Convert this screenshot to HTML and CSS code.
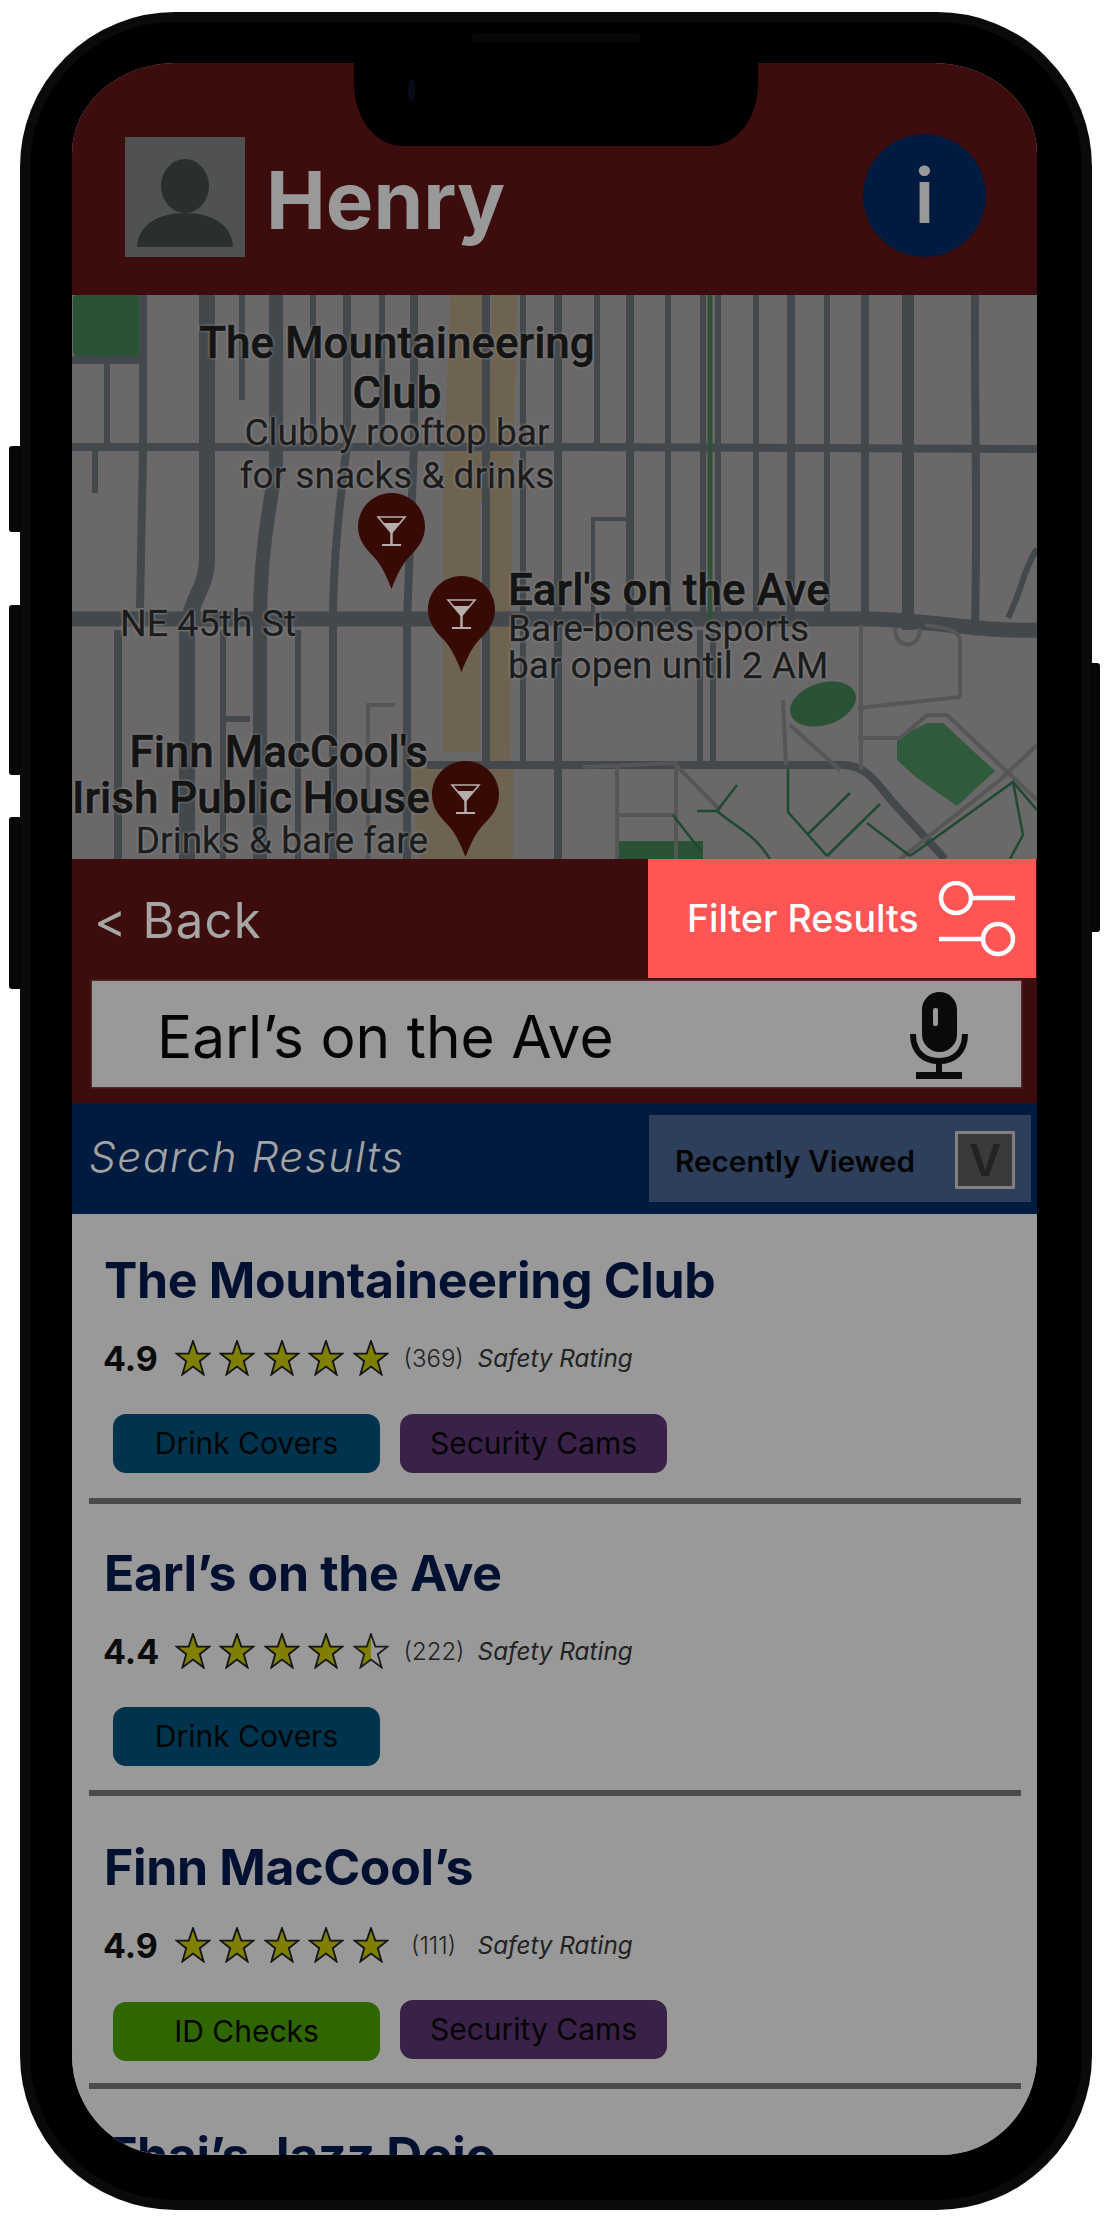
FILE: index.html
```html
<!DOCTYPE html>
<html lang="en">
<head>
<meta charset="utf-8">
<title>Henry - Search Results</title>
<link rel="stylesheet" href="styles.css">
</head>
<body>
<svg class="defs" width="0" height="0" aria-hidden="true">
  <defs>
    <symbol id="star" viewBox="0 0 36 36">
      <path d="M18 1 22.3 13.6H34.5L24.8 21.2 28.6 34.5 18 26.6 7.4 34.5 11.2 21.2 1.5 13.6H13.7Z" fill="#7f7f00" stroke="#141414" stroke-width="1.8" stroke-linejoin="miter"/>
    </symbol>
    <symbol id="star-half" viewBox="0 0 36 36">
      <path d="M18 1V26.6L7.4 34.5 11.2 21.2 1.5 13.6H13.7Z" fill="#7f7f00"/>
      <path d="M18 1 22.3 13.6H34.5L24.8 21.2 28.6 34.5 18 26.6 7.4 34.5 11.2 21.2 1.5 13.6H13.7Z" fill="none" stroke="#1c1c1c" stroke-width="1.8"/>
    </symbol>
    <symbol id="pin" viewBox="0 0 67 96">
      <path d="M33.5 0C52 0 67 15 67 33.5 67 46 60 55 52 63 44 71 38 84 33.5 96 29 84 23 71 15 63 7 55 0 46 0 33.5 0 15 15 0 33.5 0Z" fill="#370a05"/>
      <path d="M20 24H47L33.5 40Z" fill="none" stroke="#b5aead" stroke-width="1.6"/>
      <path d="M25.5 30H41.5L33.5 40Z" fill="#b5aead"/>
      <path d="M32.3 39H34.7V51H32.3ZM24 51H43V53H24Z" fill="#b5aead"/>
    </symbol>
  </defs>
</svg>

<div class="phone">
  <span class="side-btn side-btn-mute"></span>
  <span class="side-btn side-btn-up"></span>
  <span class="side-btn side-btn-down"></span>
  <span class="side-btn side-btn-power"></span>
  <span class="speaker"></span>

  <main class="screen">
    <div class="notch"><span class="camera"></span></div>

    <header class="top-bar">
      <div class="avatar">
        <svg viewBox="0 0 120 120" width="120" height="120" aria-hidden="true">
          <ellipse cx="60" cy="49" rx="24" ry="27" fill="#2b2e2e"/>
          <path d="M12 110C13 88 33 76 60 76S107 88 108 110Z" fill="#2b2e2e"/>
        </svg>
      </div>
      <h1 class="user-name">Henry</h1>
      <div class="info-btn">i</div>
    </header>

    <section class="map">
      <svg class="map-art" viewBox="72 295 965 564" width="965" height="564" aria-hidden="true">
        <g fill="#6e6350">
          <path d="M450 295H483V500H480V752H443V500Z"/>
          <path d="M492 295H517L512 500 510 767H485L488 500Z"/>
          <path d="M410 767H513V859H420Z"/>
        </g>
        <g fill="#2a5234">
          <rect x="73" y="295" width="67" height="61" rx="4"/>
          <ellipse cx="823" cy="704" rx="34" ry="21" transform="rotate(-18 823 704)"/>
          <path d="M897 738 927 723H943L995 771 957 806 917 778 897 760Z" fill="#305a3c"/>
          <rect x="615" y="841" width="88" height="18"/>
        </g>
        <g fill="none" stroke="#43484c">
          <g stroke-width="8">
            <path d="M143 295V450L140 608"/>
            <path d="M72 360H143"/>
            <path d="M72 447H560L1037 449"/>
            <path d="M486 295V765"/>
            <path d="M558 295V859"/>
            <path d="M630 295V625"/>
            <path d="M791 295V625"/>
            <path d="M865 295V625"/>
            <path d="M975 295C974 400 978 500 975 625"/>
            <path d="M414 295V445L407 620V859"/>
            <path d="M347 295V445C340 500 333 560 333 620V859"/>
            <path d="M118 630V859"/>
            <path d="M427 765H843C870 765 880 790 900 810L945 859"/>
          </g>
          <g stroke-width="6">
            <path d="M107 360V445"/>
            <path d="M95 449V493"/>
            <path d="M242 295V400"/>
            <path d="M313 295V445"/>
            <path d="M382 295V445"/>
            <path d="M523 295V765"/>
            <path d="M597 295V449"/>
            <path d="M668 295V625"/>
            <path d="M756 295V625"/>
            <path d="M827 295V625"/>
            <path d="M223 630V859"/>
            <path d="M298 630V859"/>
            <path d="M226 719H250"/>
            <path d="M703 295V620"/>
            <path d="M718 295V620"/>
            <path d="M700 630V765"/>
            <path d="M713 630V765"/>
            <path d="M1008 618C1022 590 1025 565 1037 549"/>
          </g>
          <path d="M593 615V519H627" stroke-width="4"/>
          <path d="M207 295V560C207 590 187 600 187 640V859" stroke-width="16"/>
          <path d="M276 295V470C268 510 260 560 260 620V859" stroke-width="14"/>
          <path d="M908 295V630" stroke-width="12"/>
          <path d="M72 619H870C930 620 980 632 1037 630" stroke-width="15"/>
          <path d="M710 295V625" stroke="#2e5238" stroke-width="5"/>
        </g>
        <g fill="none" stroke="#565656" stroke-width="4">
          <path d="M858 708 960 697"/>
          <path d="M858 738H900L927 715H947L1037 800"/>
          <path d="M861 625V770"/>
          <path d="M783 700 786 765"/>
          <path d="M790 725 840 770"/>
          <path d="M960 697V640C960 630 945 628 925 625"/>
          <path d="M895 628C895 650 920 650 920 628"/>
          <path d="M583 767 676 763V859"/>
          <path d="M617 765V859"/>
          <path d="M617 815H676"/>
          <path d="M676 765 720 810"/>
          <path d="M368 859V705H395"/>
          <path d="M900 859 1000 780"/>
          <path d="M1000 780 1037 745"/>
        </g>
        <g fill="none" stroke="#1e4a32" stroke-width="2.5">
          <path d="M788 769V812L827 856"/>
          <path d="M808 834 850 793"/>
          <path d="M827 856 880 804"/>
          <path d="M867 823 910 856"/>
          <path d="M697 811H717L737 785"/>
          <path d="M717 811C740 830 755 835 770 859"/>
          <path d="M673 815 700 850"/>
          <path d="M910 856 1013 782 1023 835 1010 859"/>
          <path d="M1013 782 1037 810"/>
        </g>
      </svg>

      <div class="map-label label-mount">
        <div class="place-name">The Mountaineering<br>Club</div>
        <div class="place-desc">Clubby rooftop bar<br>for snacks &amp; drinks</div>
      </div>
      <div class="map-label label-earl">
        <div class="place-name">Earl's on the Ave</div>
        <div class="place-desc">Bare-bones sports<br>bar open until 2 AM</div>
      </div>
      <div class="map-label label-finn">
        <div class="place-name">Finn MacCool's<br>Irish Public House</div>
        <div class="place-desc">Drinks &amp; bare fare</div>
      </div>
      <div class="map-label label-street">NE 45th St</div>

      <svg class="pin pin-mount" width="67" height="96" aria-hidden="true"><use href="#pin"/></svg>
      <svg class="pin pin-earl" width="67" height="96" aria-hidden="true"><use href="#pin"/></svg>
      <svg class="pin pin-finn" width="67" height="96" aria-hidden="true"><use href="#pin"/></svg>
    </section>

    <section class="controls">
      <div class="controls-row">
        <div class="back">&lt; Back</div>
        <div class="filter-btn">
          <span>Filter Results</span>
          <svg viewBox="0 0 78 76" width="78" height="76" fill="none" stroke="#fff" stroke-width="4.5" aria-hidden="true">
            <circle cx="18" cy="17" r="15"/>
            <path d="M33 17H77"/>
            <circle cx="60" cy="58" r="15"/>
            <path d="M1 58H45"/>
          </svg>
        </div>
      </div>
      <div class="search-box">
        <span class="search-text">Earl’s on the Ave</span>
        <svg class="mic" viewBox="0 0 58 88" width="58" height="88" aria-hidden="true">
          <rect x="12" y="0" width="35" height="60" rx="17.5" fill="#0a0a0a"/>
          <rect x="23" y="16" width="5" height="18" rx="2" fill="#999"/>
          <path d="M3 42C3 60 14 69 29 69S55 60 55 42" fill="none" stroke="#0a0a0a" stroke-width="6"/>
          <path d="M26 69H32V81H26Z" fill="#0a0a0a"/>
          <rect x="6" y="80" width="46" height="7" fill="#0a0a0a"/>
        </svg>
      </div>
    </section>

    <section class="results-head">
      <div class="results-title">Search Results</div>
      <div class="sort-box">
        <span class="sort-label">Recently Viewed</span>
        <span class="sort-toggle">V</span>
      </div>
    </section>

    <section class="results">
      <article class="card card-first">
        <h2 class="card-title">The Mountaineering Club</h2>
        <div class="rating-row">
          <span class="rating-value">4.9</span>
          <span class="stars">
            <svg width="36" height="36"><use href="#star"/></svg>
            <svg width="36" height="36"><use href="#star"/></svg>
            <svg width="36" height="36"><use href="#star"/></svg>
            <svg width="36" height="36"><use href="#star"/></svg>
            <svg width="36" height="36"><use href="#star"/></svg>
          </span>
          <span class="rating-count">(369)</span>
          <span class="rating-note">Safety Rating</span>
        </div>
        <div class="tags">
          <span class="tag tag-drink">Drink Covers</span>
          <span class="tag tag-cams">Security Cams</span>
        </div>
      </article>

      <article class="card card-second">
        <h2 class="card-title">Earl’s on the Ave</h2>
        <div class="rating-row">
          <span class="rating-value">4.4</span>
          <span class="stars">
            <svg width="36" height="36"><use href="#star"/></svg>
            <svg width="36" height="36"><use href="#star"/></svg>
            <svg width="36" height="36"><use href="#star"/></svg>
            <svg width="36" height="36"><use href="#star"/></svg>
            <svg width="36" height="36"><use href="#star-half"/></svg>
          </span>
          <span class="rating-count">(222)</span>
          <span class="rating-note">Safety Rating</span>
        </div>
        <div class="tags">
          <span class="tag tag-drink">Drink Covers</span>
        </div>
      </article>

      <article class="card card-third">
        <h2 class="card-title">Finn MacCool’s</h2>
        <div class="rating-row">
          <span class="rating-value">4.9</span>
          <span class="stars">
            <svg width="36" height="36"><use href="#star"/></svg>
            <svg width="36" height="36"><use href="#star"/></svg>
            <svg width="36" height="36"><use href="#star"/></svg>
            <svg width="36" height="36"><use href="#star"/></svg>
            <svg width="36" height="36"><use href="#star"/></svg>
          </span>
          <span class="rating-count">(111)</span>
          <span class="rating-note">Safety Rating</span>
        </div>
        <div class="tags">
          <span class="tag tag-id">ID Checks</span>
          <span class="tag tag-cams">Security Cams</span>
        </div>
      </article>

      <article class="card">
        <h2 class="card-title">Thai’s Jazz Dojo</h2>
      </article>
    </section>
  </main>
</div>
</body>
</html>
```

FILE: styles.css
```css
* { box-sizing: border-box; }

html, body {
  margin: 0;
  padding: 0;
  background: #fff;
}

body {
  width: 1110px;
  height: 2224px;
  overflow: hidden;
  padding: 12px 0 0 20px;
  font-family: Inter, "Liberation Sans", sans-serif;
}

.defs { position: absolute; }

.phone {
  position: relative;
  width: 1072px;
  height: 2198px;
  padding: 41px 45px 45px 42px;
  border: 10px solid #090a0a;
  border-radius: 155px;
  background: #000;
}

.side-btn {
  position: absolute;
  width: 12px;
  background: #060606;
  border-radius: 3px 0 0 3px;
}
.side-btn-mute { left: -21px; top: 424px; height: 86px; }
.side-btn-up { left: -21px; top: 583px; height: 170px; }
.side-btn-down { left: -21px; top: 795px; height: 172px; }
.side-btn-power {
  left: auto;
  right: -18px;
  top: 641px;
  width: 9px;
  height: 269px;
  border-radius: 0 3px 3px 0;
}

.speaker {
  position: absolute;
  left: 441px;
  top: 11px;
  width: 170px;
  height: 10px;
  border-radius: 5px;
  background: #070707;
}

.screen {
  position: relative;
  width: 965px;
  height: 2092px;
  overflow: hidden;
  border-radius: 104px 104px 96px 96px / 90px 90px 100px 100px;
  background: #999;
}

.notch {
  position: absolute;
  left: 282px;
  top: 0;
  width: 404px;
  height: 83px;
  background: #000;
  border-radius: 4px 4px 48px 48px / 0 0 62px 62px;
  z-index: 3;
}

.camera {
  position: absolute;
  left: 54px;
  top: 16px;
  width: 7px;
  height: 22px;
  border-radius: 50%;
  background: #080d1a;
}

.top-bar {
  display: flex;
  align-items: flex-start;
  height: 232px;
  padding: 74px 51px 0 53px;
  background: #3d0d0d;
}

.avatar {
  flex: none;
  width: 120px;
  height: 120px;
  background: #505252;
}
.avatar svg { display: block; }

.user-name {
  margin: 15px 0 0 21px;
  font-size: 80px;
  line-height: 96px;
  font-weight: 700;
  color: #999;
}

.info-btn {
  flex: none;
  width: 123px;
  height: 123px;
  margin: -3px 0 0 auto;
  border-radius: 50%;
  background: #001a40;
  color: #999;
  font-size: 76px;
  font-weight: 600;
  line-height: 123px;
  text-align: center;
}

.map {
  position: relative;
  height: 564px;
  overflow: hidden;
  background: #6a6868;
  font-family: Roboto, "Liberation Sans", sans-serif;
  color: #141414;
}

.map-art {
  position: absolute;
  left: 0;
  top: 0;
}

.map-label {
  position: absolute;
  white-space: nowrap;
  text-shadow: 0 0 3px #8d8d8d, 0 0 3px #8d8d8d;
}

.place-name {
  font-size: 44px;
  font-weight: 500;
  line-height: 50px;
  -webkit-text-stroke: 0.6px #141414;
}

.place-desc {
  color: #1c1c1c;
  font-size: 37px;
  line-height: 43px;
  -webkit-text-stroke: 0.3px #1c1c1c;
}

.label-mount {
  left: 110px;
  top: 23px;
  width: 430px;
  text-align: center;
}
.label-mount .place-desc { margin-top: -7px; }

.label-earl {
  left: 436px;
  top: 275px;
}
.label-earl .place-name { line-height: 40px; }
.label-earl .place-desc { line-height: 37px; }

.label-finn {
  left: 0;
  top: 434px;
  width: 356px;
  text-align: right;
}
.label-finn .place-name { line-height: 46px; }
.label-finn .place-desc { line-height: 40px; }

.label-street {
  left: 48px;
  top: 308px;
  color: #1c1c1c;
  font-size: 37.5px;
  line-height: 40px;
  -webkit-text-stroke: 0.3px #1c1c1c;
}

.pin { position: absolute; }
.pin-mount { left: 286px; top: 198px; }
.pin-earl { left: 356px; top: 281px; }
.pin-finn { left: 360px; top: 466px; }

.controls {
  height: 244px;
  background: #3d0d0d;
}

.controls-row {
  display: flex;
  justify-content: space-between;
  height: 119px;
}

.back {
  padding: 33px 0 0 22px;
  color: #a6a6a6;
  font-size: 49px;
  font-weight: 400;
  line-height: 58px;
  letter-spacing: 1.2px;
}

.filter-btn {
  display: flex;
  flex: none;
  align-items: center;
  justify-content: space-between;
  width: 388px;
  height: 122px;
  margin: -3px 1px 0 0;
  padding: 0 20px 0 39px;
  border-top: 3px solid #f2f2f2;
  background: #ff5555;
  color: #fff;
  font-size: 37.5px;
  font-weight: 500;
  line-height: 40px;
}

.search-box {
  display: flex;
  align-items: center;
  justify-content: space-between;
  width: 929px;
  height: 106px;
  margin: 3px 0 0 20px;
  padding: 0 53px 0 65px;
  background: #999;
  box-shadow: 0 0 0 1.5px #4b2a2a;
}

.search-text {
  margin-top: 5px;
  color: #050505;
  font-size: 58.6px;
  font-weight: 400;
}

.mic { margin-top: 3px; }

.results-head {
  display: flex;
  justify-content: space-between;
  height: 111px;
  background: #001a40;
}

.results-title {
  padding: 29px 0 0 17px;
  color: #a3a3a3;
  font-size: 42.5px;
  font-weight: 300;
  font-style: italic;
  line-height: 50px;
  letter-spacing: 1.5px;
}

.sort-box {
  display: flex;
  flex: none;
  align-items: center;
  justify-content: space-between;
  width: 382px;
  height: 87px;
  margin: 12px 6px 0 0;
  padding: 0 16px 0 26px;
  background: #2d3f5a;
}

.sort-label {
  margin-top: 4px;
  color: #050505;
  font-size: 29.7px;
  font-weight: 600;
}

.sort-toggle {
  width: 60px;
  height: 58px;
  margin-top: 2px;
  border: 3px solid #808080;
  background: #3a3a3a;
  color: #222;
  font-size: 44px;
  font-weight: 600;
  line-height: 52px;
  text-align: center;
}

.results {
  background: #999;
}

.card {
  margin: 0 16px 0 17px;
  padding: 37px 0 25px 15px;
  border-bottom: 6px solid #4a4a4a;
}
.card:last-child { border-bottom: 0; }
.card-second { padding-top: 40px; padding-bottom: 24.5px; }
.card-third { padding-top: 42px; padding-bottom: 21.6px; }

.card-title {
  margin: 0;
  color: #001030;
  font-size: 50px;
  font-weight: 700;
  line-height: 58px;
  letter-spacing: -0.35px;
}

.rating-row {
  display: flex;
  align-items: center;
  height: 36px;
  margin-top: 31px;
}

.rating-value {
  flex: none;
  width: 71px;
  margin-left: -1px;
  margin-right: 1px;
  color: #0a0a0a;
  font-size: 34px;
  font-weight: 700;
}

.stars {
  display: flex;
  flex: none;
  gap: 8.4px;
}
.stars svg { display: block; }

.rating-count {
  flex: none;
  width: 60px;
  margin-left: 15px;
  color: #222;
  font-size: 24px;
  font-weight: 300;
  text-align: center;
}

.rating-note {
  margin-left: 14px;
  color: #222;
  font-size: 24.3px;
  font-style: italic;
}

.tags {
  display: flex;
  align-items: flex-start;
  gap: 20px;
  margin: 38px 0 0 9px;
}
.card-second .tags { margin-top: 37.5px; }
.card-third .tags { margin-top: 37.4px; }

.tag {
  width: 267px;
  height: 59px;
  border-radius: 13px;
  color: #050505;
  font-size: 30px;
  line-height: 59px;
  text-align: center;
}
.tag-drink { background: #00344e; }
.tag-cams { background: #3a2148; }
.tag-id { margin-top: 2px; background: #2f6600; }
```
